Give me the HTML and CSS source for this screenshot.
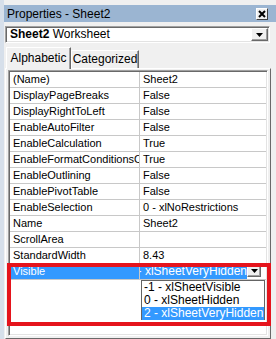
FILE: index.html
```html
<!DOCTYPE html>
<html>
<head>
<meta charset="utf-8">
<link rel="stylesheet" href="styles.css">
</head>
<body>
<div class="window">
  <div class="edge"></div>
  <div class="main">
    <div class="titlebar">
      <span class="title">Properties - Sheet2</span>
      <span class="close"><svg width="8" height="8" viewBox="0 0 8 8"><path d="M1 1L7 7M7 1L1 7" stroke="#000" stroke-width="2" fill="none"/></svg></span>
    </div>
    <div class="combo">
      <div class="combo-text"><b>Sheet2</b> Worksheet</div>
      <div class="dd-btn"><svg width="7" height="4" viewBox="0 0 7 4"><path d="M0 0H7L3.5 4Z" fill="#000"/></svg></div>
    </div>
    <div class="tabs">
      <div class="tab active">Alphabetic</div>
      <div class="tab">Categorized</div>
    </div>
    <div class="panel">
      <div class="grid">
        <div class="row"><div class="cell name">(Name)</div><div class="cell val">Sheet2</div></div>
        <div class="row"><div class="cell name">DisplayPageBreaks</div><div class="cell val">False</div></div>
        <div class="row"><div class="cell name">DisplayRightToLeft</div><div class="cell val">False</div></div>
        <div class="row"><div class="cell name">EnableAutoFilter</div><div class="cell val">False</div></div>
        <div class="row"><div class="cell name">EnableCalculation</div><div class="cell val">True</div></div>
        <div class="row"><div class="cell name">EnableFormatConditionsCa</div><div class="cell val">True</div></div>
        <div class="row"><div class="cell name">EnableOutlining</div><div class="cell val">False</div></div>
        <div class="row"><div class="cell name">EnablePivotTable</div><div class="cell val">False</div></div>
        <div class="row"><div class="cell name">EnableSelection</div><div class="cell val">0 - xlNoRestrictions</div></div>
        <div class="row"><div class="cell name">Name</div><div class="cell val">Sheet2</div></div>
        <div class="row"><div class="cell name">ScrollArea</div><div class="cell val"></div></div>
        <div class="row"><div class="cell name">StandardWidth</div><div class="cell val">8.43</div></div>
        <div class="row sel">
          <div class="cell name">Visible</div>
          <div class="cell val edit">
            <div class="edit-text"><span>2 - xlSheetVeryHidden</span></div>
            <div class="edit-btn"><svg width="7" height="4" viewBox="0 0 7 4"><path d="M0 0H7L3.5 4Z" fill="#000"/></svg></div>
          </div>
        </div>
        <div class="list">
          <div class="item">-1 - xlSheetVisible</div>
          <div class="item">0 - xlSheetHidden</div>
          <div class="item picked">2 - xlSheetVeryHidden</div>
        </div>
      </div>
    </div>
  </div>
  <div class="mark"></div>
</div>
</body>
</html>
```
FILE: styles.css
```css
html, body {
  margin: 0;
  padding: 0;
}
body {
  background: #f0f0f0;
  width: 276px;
  height: 339px;
  overflow: hidden;
  font-family: "Liberation Sans", Arial, sans-serif;
  font-size: 11px;
  color: #000;
}
.window {
  position: relative;
  display: flex;
  height: 339px;
}
.edge {
  width: 4px;
  background: #d6dfea;
}
.main {
  flex: 1;
  display: flex;
  flex-direction: column;
  min-width: 0;
}
.titlebar {
  margin-top: 5px;
  height: 17px;
  background: #9bb5d2;
  display: flex;
  align-items: center;
  justify-content: space-between;
  padding: 0 8px 0 3px;
  font-size: 12px;
}
.close {
  width: 12px;
  height: 12px;
  box-sizing: border-box;
  background: #f0f0f0;
  border: 1px solid;
  border-color: #fff #404040 #404040 #fff;
  display: flex;
  align-items: center;
  justify-content: center;
}
.close svg { display: block; }
.combo {
  margin: 4px 6px 0 1px;
  height: 17px;
  box-sizing: border-box;
  background: #fff;
  border: 1px solid;
  border-color: #a0a0a0 #fff #fff #a0a0a0;
  box-shadow: inset 1px 1px #696969, inset -1px -1px #e3e3e3;
  display: flex;
  align-items: stretch;
  padding: 1px;
  font-size: 12px;
}
.combo-text {
  flex: 1;
  padding-left: 3px;
  line-height: 13px;
}
.dd-btn {
  width: 17px;
  box-sizing: border-box;
  background: #f0f0f0;
  border: 1px solid;
  border-color: #fff #696969 #696969 #fff;
  box-shadow: inset -1px -1px #a0a0a0;
  display: flex;
  align-items: center;
  justify-content: center;
}
.tabs {
  display: flex;
  align-items: flex-end;
  margin-top: 4px;
  height: 21px;
  padding-left: 2px;
  position: relative;
  z-index: 1;
  font-size: 12px;
}
.tab {
  box-sizing: border-box;
  height: 18px;
  width: 68px;
  border: 1px solid;
  border-bottom: none;
  border-color: #fff #696969 #696969 #fff;
  box-shadow: inset -1px 0 #a0a0a0;
  text-align: center;
  line-height: 17px;
  background: #f0f0f0;
}
.tab.active {
  width: 65px;
  height: 22px;
  margin-bottom: -1px;
  line-height: 20px;
}
.panel {
  flex: 1;
  margin: 0 5px 0 1px;
  border: 1px solid;
  border-color: #fff #696969 #696969 #fff;
  padding: 1px 2px;
  min-height: 0;
}
.grid {
  position: relative;
  height: 266px;
  box-sizing: border-box;
  border: 1px solid;
  border-color: #a0a0a0 #fff #fff #a0a0a0;
  box-shadow: inset 1px 1px #696969, inset -1px -1px #e3e3e3;
  background: #fff;
  padding: 1px;
}
.row {
  display: grid;
  grid-template-columns: 130px 1fr;
  height: 16px;
}
.cell {
  box-sizing: border-box;
  height: 16px;
  line-height: 15px;
  border-bottom: 1px solid #c8c8c8;
  padding-left: 3px;
  white-space: nowrap;
  overflow: hidden;
  text-overflow: clip;
}
.name {
  border-right: 1px solid #c8c8c8;
}
.val {
  padding-left: 3px;
}
.sel .name {
  background: #3399ff;
  color: #fff;
}
.edit {
  display: flex;
  padding-left: 0;
  padding-right: 3px;
}
.edit-text {
  width: 107px;
  display: flex;
  justify-content: flex-end;
  overflow: hidden;
  background: #3399ff;
  color: #fff;
  font-size: 12px;
}
.edit-text span {
  flex-shrink: 0;
}
.edit-btn {
  width: 14px;
  height: 13px;
  box-sizing: border-box;
  background: #f0f0f0;
  border: 1px solid;
  border-color: #fff #696969 #696969 #fff;
  box-shadow: inset -1px -1px #a0a0a0;
  display: flex;
  align-items: center;
  justify-content: center;
}
.list {
  position: absolute;
  left: 132px;
  top: 209px;
  width: 124px;
  height: 40px;
  box-sizing: border-box;
  border: 1px solid #646464;
  background: #fff;
}
.item {
  height: 13px;
  line-height: 13px;
  padding-left: 2px;
  white-space: nowrap;
  font-size: 12px;
}
.item.picked {
  background: #3399ff;
  color: #fff;
}
.mark {
  position: absolute;
  left: 7px;
  top: 263px;
  width: 264px;
  height: 63px;
  box-sizing: border-box;
  border: 4px solid #e5141c;
}
```
